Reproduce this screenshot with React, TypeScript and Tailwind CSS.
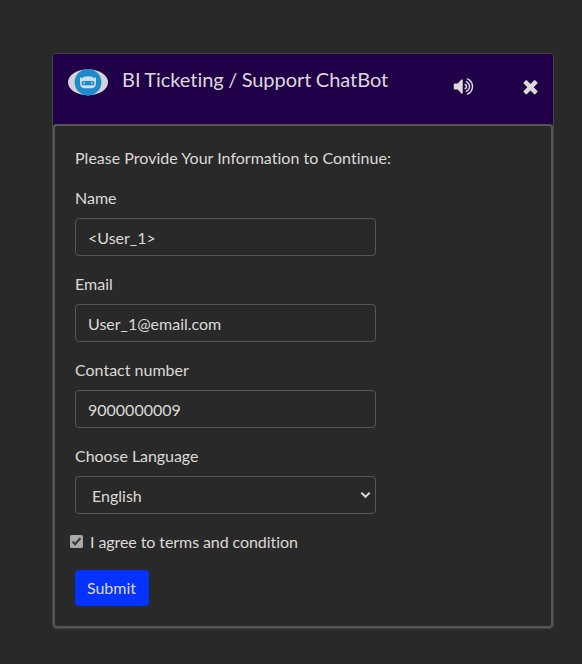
import React from 'react';

function BotLogo() {
  return (
    <svg className="mt-[15px] ml-[15px] h-[27px] w-10 shrink-0" viewBox="0 0 40 27">
      <ellipse cx="20" cy="13.2" rx="20" ry="13" fill="#d7d1df" />
      <circle cx="20" cy="13.2" r="13.3" fill="#1b8bc9" />
      <path
        d="M12 7.8 L13.2 9.2 Q15.8 7.2 20 7.2 Q24.2 7.2 26.8 9.2 L28 7.8 V14.5 Q27.5 19.2 23.5 19.2 H16.5 Q12.5 19.2 12 14.5Z"
        fill="#d3dbe9"
      />
      <rect x="13.5" y="12" width="13" height="4.2" rx="2" fill="#1b8bc9" />
      <circle cx="16.2" cy="14.1" r="0.9" fill="#d3dbe9" />
      <circle cx="23.8" cy="14.1" r="0.9" fill="#d3dbe9" />
    </svg>
  );
}

function VolumeIcon() {
  return (
    <svg viewBox="0 0 1792 1792" className="h-[21px] w-[21px]" fill="currentColor">
      <path d="M832 352v1088q0 26-19 45t-45 19-45-19l-333-333h-262q-26 0-45-19t-19-45v-384q0-26 19-45t45-19h262l333-333q19-19 45-19t45 19 19 45zm384 544q0 76-42.5 141.5t-112.5 93.5q-10 5-25 5-26 0-45-18.5t-19-45.5q0-21 12-35.5t29-25 34-23 29-36 12-56.5-12-56.5-29-36-34-23-29-25-12-35.5q0-27 19-45.5t45-18.5q15 0 25 5 70 27 112.5 93t42.5 142zm256 0q0 153-85 282.5t-225 188.5q-13 5-25 5-27 0-46-19t-19-45q0-39 39-59 56-29 76-44 74-54 115.5-135.5t41.5-173.5-41.5-173.5-115.5-135.5q-20-15-76-44-39-20-39-59 0-26 19-45t45-19q13 0 26 5 140 59 225 188.5t85 282.5zm256 0q0 230-127 422.5t-338 283.5q-13 5-26 5-26 0-45-19t-19-45q0-36 39-59 7-4 22.5-10.5t22.5-10.5q46-25 82-51 123-91 192-227t69-289-69-289-192-227q-36-26-82-51-7-4-22.5-10.5t-22.5-10.5q-39-23-39-59 0-26 19-45t45-19q13 0 26 5 211 91 338 283.5t127 422.5z" />
    </svg>
  );
}

function CloseIcon() {
  return (
    <svg viewBox="0 0 1792 1792" className="h-[21px] w-[21px]" fill="currentColor">
      <path d="M1490 1322q0 40-28 68l-136 136q-28 28-68 28t-68-28l-294-294-294 294q-28 28-68 28t-68-28l-136-136q-28-28-28-68t28-68l294-294-294-294q-28-28-28-68t28-68l136-136q28-28 68-28t68 28l294 294 294-294q28-28 68-28t68 28l136 136q28 28 28 68t-28 68l-294 294 294 294q28 28 28 68z" />
    </svg>
  );
}

const fieldClass =
  'h-[38px] w-full appearance-none rounded border border-[#575757] bg-transparent px-3 pt-px text-base text-[#dcdad7] outline-none';

function Field({ label, value }: { label: string; value: string }) {
  return (
    <label className="mb-4 block">
      <span className="mb-2 block leading-6">{label}</span>
      <input className={`${fieldClass} block`} defaultValue={value} />
    </label>
  );
}

export default function App() {
  return (
    <main className="h-[664px] w-[582px] bg-[#292929] pt-[53px] pl-[52px] font-['Lato',sans-serif] text-base text-[#dcdad7] [font-variant-ligatures:none]">
      <section className="h-[576px] w-[502px] rounded border border-[#444444]">
        <header className="flex h-[70px] rounded-t-[3px] bg-[#200049]">
          <BotLogo />
          <h1 className="mt-[10px] ml-[14px] w-[331px] text-xl leading-[30px] tracking-[-0.04px] [word-spacing:-0.6px]">
            BI Ticketing / Support ChatBot
          </h1>
          <button className="mt-[22px] h-[21px]" aria-label="Sound">
            <VolumeIcon />
          </button>
          <button className="mt-[22px] ml-[46px] h-[21px]" aria-label="Close">
            <CloseIcon />
          </button>
        </header>
        <form className="h-[504px] rounded border-2 border-[#555555] px-5 pt-5">
          <p className="mb-4 leading-6 tracking-[0.02px]">Please Provide Your Information to Continue:</p>
          <div className="w-[301px]">
            <Field label="Name" value="<User_1>" />
            <Field label="Email" value="User_1@email.com" />
            <Field label="Contact number" value="9000000009" />
            <label className="mb-4 block">
              <span className="mb-2 block leading-6 tracking-[-0.05px]">Choose Language</span>
              <span className="relative block">
                <select className={`${fieldClass} block pl-4`}>
                  <option>English</option>
                </select>
                <svg
                  className="pointer-events-none absolute top-[15px] right-[5px] h-2 w-[11px]"
                  viewBox="0 0 11 8"
                  fill="none"
                  stroke="currentColor"
                  strokeWidth="2"
                >
                  <path d="M1.3 1.6 L5.5 5.8 L9.7 1.6" />
                </svg>
              </span>
            </label>
          </div>
          <label className="-ml-[5px] flex items-center leading-6 tracking-[-0.08px]">
            <svg className="mr-[7px] -mt-[2px] h-[13px] w-[13px]" viewBox="0 0 13 13">
              <rect width="13" height="13" rx="1.5" fill="#a9a9a9" />
              <path d="M2.5 6.6 L5.1 9.2 L10.4 3.2" fill="none" stroke="#333333" strokeWidth="2" />
            </svg>
            I agree to terms and condition
          </label>
          <button type="button" className="mt-4 h-9 w-[74px] rounded bg-[#0433ff] pr-px leading-6">
            Submit
          </button>
        </form>
      </section>
    </main>
  );
}
